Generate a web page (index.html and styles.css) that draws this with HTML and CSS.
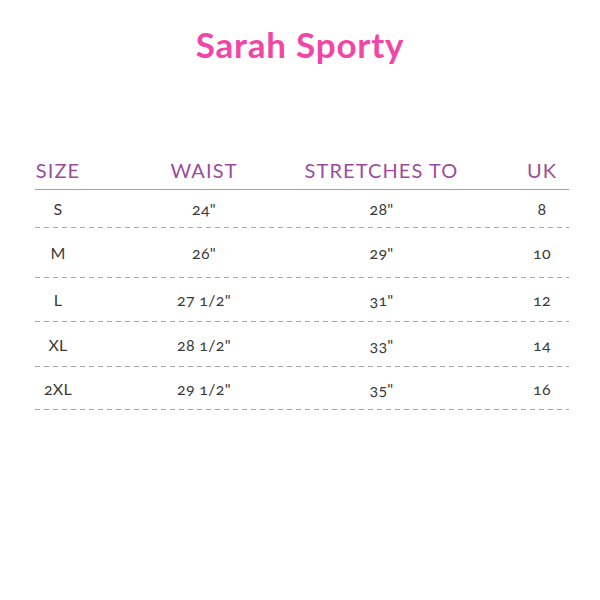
FILE: index.html
```html
<!DOCTYPE html>
<html>
<head>
<meta charset="utf-8">
<link rel="stylesheet" href="styles.css">
</head>
<body>
<h1 class="title">Sarah Sporty</h1>
<div class="chart">
  <div class="row head">
    <div class="c1">SIZE</div>
    <div class="c2">WAIST</div>
    <div class="c3">STRETCHES TO</div>
    <div class="c4">UK</div>
  </div>
  <div class="row r1">
    <div class="c1">S</div>
    <div class="c2">24&quot;</div>
    <div class="c3">28&quot;</div>
    <div class="c4">8</div>
  </div>
  <div class="row r2">
    <div class="c1">M</div>
    <div class="c2">26&quot;</div>
    <div class="c3">29&quot;</div>
    <div class="c4">10</div>
  </div>
  <div class="row">
    <div class="c1">L</div>
    <div class="c2">27 1/2&quot;</div>
    <div class="c3">31&quot;</div>
    <div class="c4">12</div>
  </div>
  <div class="row r4">
    <div class="c1">XL</div>
    <div class="c2">28 1/2&quot;</div>
    <div class="c3">33&quot;</div>
    <div class="c4">14</div>
  </div>
  <div class="row r5">
    <div class="c1">2XL</div>
    <div class="c2">29 1/2&quot;</div>
    <div class="c3">35&quot;</div>
    <div class="c4">16</div>
  </div>
</div>
</body>
</html>
```
FILE: styles.css
```css
html, body {
  margin: 0;
  padding: 0;
  background: #ffffff;
}
body {
  font-family: Lato, "Open Sans", sans-serif;
  width: 600px;
  height: 600px;
}
.title {
  margin: 24px 0 0 0;
  text-align: center;
  font-size: 35px;
  line-height: 40px;
  letter-spacing: 0.8px;
  font-weight: 700;
  color: #f246a6;
}
.chart {
  margin: 94px 0 0 35px;
  width: 534px;
}
.row {
  display: grid;
  grid-template-columns: 69px 200px 155px 110px;
  align-items: center;
  height: 44px;
  font-size: 16px;
  line-height: 20px;
  letter-spacing: 0.3px;
  color: #3a3a3a;
  font-variant-numeric: oldstyle-nums;
  background: repeating-linear-gradient(to right, #a8a8a8 0 5px, transparent 5px 9px) left bottom / 100% 1px no-repeat;
}
.row > div {
  text-align: center;
}
.row .c1 {
  padding-right: 23px;
}
.row .c4 {
  padding-left: 56px;
}
.head {
  height: auto;
  padding-bottom: 7px;
  font-size: 20px;
  line-height: 24px;
  letter-spacing: 1.1px;
  color: #9c4c9c;
  background: none;
  border-bottom: 1.5px solid #a0a0a0;
  font-variant-numeric: normal;
}
.r1 {
  height: 38px;
}
.r2 {
  height: 50px;
}
.r4 {
  height: 45px;
}
.r5 {
  height: 43px;
}
```
